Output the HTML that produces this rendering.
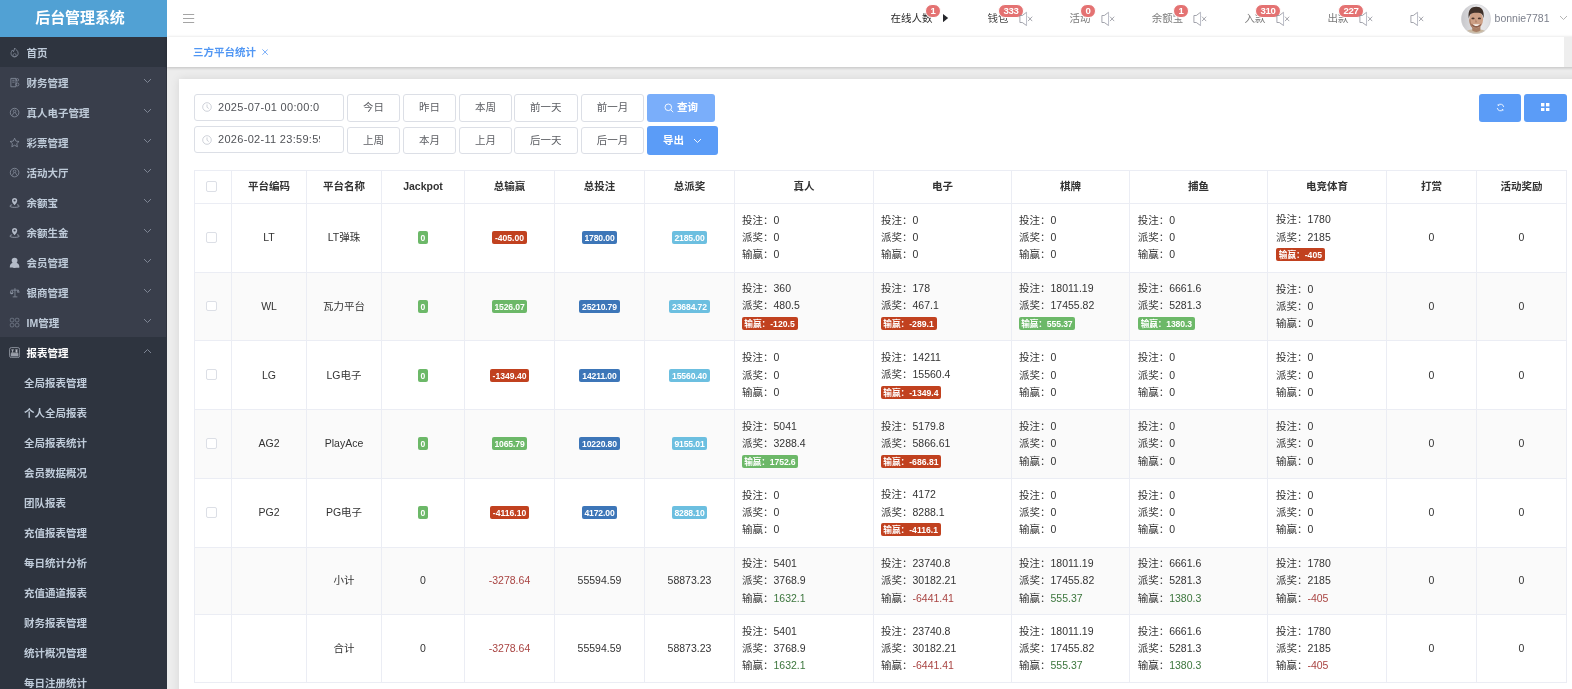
<!DOCTYPE html><html lang="zh-CN"><head><meta charset="utf-8"><title>后台管理系统</title><style>
*{box-sizing:border-box;margin:0;padding:0}
html,body{width:1572px;height:689px;overflow:hidden}
body{position:relative;background:#ededed;font-family:"Liberation Sans","Noto Sans CJK SC",sans-serif;font-size:10.5px;color:#333;-webkit-font-smoothing:antialiased}
.abs{position:absolute}
/* sidebar */
#side{position:absolute;left:0;top:0;width:167px;height:689px;background:#393e4b;overflow:hidden;box-shadow:inset -1px 0 0 rgba(0,0,0,.15)}
#logo{position:absolute;left:0;top:0;width:167px;height:37px;background:#51a1d4;color:#fff;font-weight:bold;font-size:15px;line-height:36px;text-align:center;padding-right:7px;letter-spacing:-0.1px}
.mi{position:absolute;left:0;width:167px;height:30px;line-height:32px;color:#bfcbd9;font-weight:bold;font-size:10.5px;padding-left:26.5px;white-space:nowrap}
.mi.sub{padding-left:24px}
.mi svg.ic{position:absolute;left:8.7px;top:9.7px;width:11.2px;height:11.2px}
.mi svg.ar{position:absolute;left:143px;top:10.6px;width:9px;height:6px}
#home{background:#2e343f}
#subbg{position:absolute;left:0;top:337px;width:167px;height:360px;background:#2e343f}
/* header */
#head{position:absolute;left:167px;top:0;width:1405px;height:37px;background:#fff}
#tabs{position:absolute;left:167px;top:37px;width:1425px;height:30px;background:#fff;box-shadow:0 1px 3px rgba(0,0,0,.2),0 -1px 3px rgba(0,0,0,.045)}
#tabs .sb{position:absolute;left:1397px;top:0;width:8px;height:30px;background:#eee}
#tabs .t{position:absolute;left:26px;top:0;line-height:30px;color:#5197f4;font-size:10.5px;font-weight:bold}
.hi{position:absolute;top:0;height:36px;line-height:36px;font-size:10.5px;color:#666;white-space:nowrap}
.bd{position:absolute;height:14px;line-height:11.8px;border-radius:7px;background:#e47272;color:#fff;font-size:9.6px;letter-spacing:-.3px;font-weight:bold;text-align:center;padding:0 4.5px;white-space:nowrap;border:0.75px solid #fff}
/* card */
#card{position:absolute;left:178.5px;top:78.5px;width:1420px;height:640px;background:#fff;box-shadow:0 0 9px rgba(0,0,0,.10)}
.inp{position:absolute;left:194px;width:150px;height:27px;border:1px solid #dcdfe6;border-radius:3px;background:#fff;font-size:11px;letter-spacing:.3px;line-height:25px;color:#505257;padding-left:23px;overflow:hidden;white-space:nowrap}
.inp span{display:block;width:101.8px;overflow:hidden}
.btn{position:absolute;height:27.5px;border:1px solid #dcdfe6;border-radius:3px;background:#fff;font-size:10.5px;line-height:25.5px;color:#5c5e63;text-align:center}
.pb{position:absolute;border-radius:3px;background:#5b9cf7;color:#fff;font-weight:bold;font-size:10.5px;text-align:center}
/* table */
#tbl{position:absolute;left:0;top:0;width:0;height:0;font-size:10.5px;color:#333}
#tbl .c{position:absolute;height:17px;line-height:17px;text-align:center;white-space:nowrap}
#tbl .hd{font-weight:bold}
#tbl .ln{position:absolute;height:17px;line-height:17px;white-space:nowrap}
.cb{position:absolute;width:10.5px;height:10.5px;border:1px solid #dcdfe6;border-radius:2px;background:#fff}
.lb{display:inline-block;color:#fff;font-weight:bold;font-size:8.6px;line-height:14.9px;height:12.9px;overflow:hidden;padding:0 2.85px;border-radius:2px;vertical-align:top}
.r{background:#c1411f}.b{background:#3d76b8}.i{background:#6cbfe0}.g{background:#6cb868}
.tg{color:#3c763d}.tr{color:#a94442}
</style></head><body>
<div id="wrap" style="position:absolute;left:0;top:0;width:1572px;height:689px;will-change:transform">
<div id="side"><div id="logo">后台管理系统</div><div id="subbg"></div>
<div class="mi" id="home" style="top:37px;"><svg class="ic" viewBox="0 0 12 12"><path d="M6 1.2 C7 2.6 9.8 3.6 9.8 6.8 C9.8 9 8.2 10.6 6 10.6 C3.8 10.6 2.2 9 2.2 6.8 C2.2 5 3.2 4.4 3.6 3.2 C4.4 3.8 4.6 4.4 4.8 5 C5.4 4 5.8 2.6 6 1.2 Z" fill="none" stroke="#8f97a6" stroke-width=".8"/><path d="M6 10.4 C4.9 10.4 4.3 9.6 4.3 8.8 C4.3 7.8 5.4 7.4 6 6.4 C6.6 7.4 7.7 7.8 7.7 8.8 C7.7 9.6 7.1 10.4 6 10.4Z" fill="none" stroke="#8f97a6" stroke-width=".7"/></svg>首页</div>
<div class="mi" style="top:67px;"><svg class="ic" viewBox="0 0 12 12"><path d="M2 1.5 H7.5 V10.5 H2 Z M3.5 3.5 H6 M3.5 5.5 H6" fill="none" stroke="#8f97a6" stroke-width=".8"/><circle cx="9" cy="3" r="1.3" fill="none" stroke="#8f97a6" stroke-width=".7"/><circle cx="9" cy="8" r="1.6" fill="none" stroke="#8f97a6" stroke-width=".7"/></svg>财务管理<svg class="ar" viewBox="0 0 9 6"><path d="M1 1 L4.5 4.5 L8 1" fill="none" stroke="#7e8594" stroke-width="1"/></svg></div>
<div class="mi" style="top:97px;"><svg class="ic" viewBox="0 0 12 12"><circle cx="6" cy="6" r="4.6" fill="none" stroke="#8f97a6" stroke-width=".8"/><circle cx="6" cy="4.6" r="1.4" fill="none" stroke="#8f97a6" stroke-width=".7"/><path d="M3.2 9.4 L5.2 6 M8.8 9.4 L6.8 6" fill="none" stroke="#8f97a6" stroke-width=".7"/></svg>真人电子管理<svg class="ar" viewBox="0 0 9 6"><path d="M1 1 L4.5 4.5 L8 1" fill="none" stroke="#7e8594" stroke-width="1"/></svg></div>
<div class="mi" style="top:127px;"><svg class="ic" viewBox="0 0 12 12"><path d="M6 1.3 L7.4 4.4 L10.8 4.8 L8.3 7.1 L9 10.5 L6 8.8 L3 10.5 L3.7 7.1 L1.2 4.8 L4.6 4.4 Z" fill="none" stroke="#8f97a6" stroke-width=".8" stroke-linejoin="round"/></svg>彩票管理<svg class="ar" viewBox="0 0 9 6"><path d="M1 1 L4.5 4.5 L8 1" fill="none" stroke="#7e8594" stroke-width="1"/></svg></div>
<div class="mi" style="top:157px;"><svg class="ic" viewBox="0 0 12 12"><circle cx="6" cy="6" r="4.6" fill="none" stroke="#8f97a6" stroke-width=".8"/><circle cx="6" cy="4.6" r="1.4" fill="none" stroke="#8f97a6" stroke-width=".7"/><path d="M3.2 9.4 L5.2 6 M8.8 9.4 L6.8 6" fill="none" stroke="#8f97a6" stroke-width=".7"/></svg>活动大厅<svg class="ar" viewBox="0 0 9 6"><path d="M1 1 L4.5 4.5 L8 1" fill="none" stroke="#7e8594" stroke-width="1"/></svg></div>
<div class="mi" style="top:187px;"><svg class="ic" viewBox="0 0 12 12"><path d="M6 8.8 C4.4 6.8 3.2 5.6 3.2 3.9 A2.8 2.8 0 0 1 8.8 3.9 C8.8 5.6 7.6 6.8 6 8.8 Z" fill="#b4bbc8"/><circle cx="6" cy="3.8" r="1.15" fill="#393e4b"/><path d="M3.4 8.4 C1.8 8.6 1 9.2 1 9.8 C1 10.6 3.2 11.1 6 11.1 C8.8 11.1 11 10.6 11 9.8 C11 9.2 10.2 8.6 8.6 8.4" fill="none" stroke="#aab1be" stroke-width=".8"/></svg>余额宝<svg class="ar" viewBox="0 0 9 6"><path d="M1 1 L4.5 4.5 L8 1" fill="none" stroke="#7e8594" stroke-width="1"/></svg></div>
<div class="mi" style="top:217px;"><svg class="ic" viewBox="0 0 12 12"><path d="M6 8.8 C4.4 6.8 3.2 5.6 3.2 3.9 A2.8 2.8 0 0 1 8.8 3.9 C8.8 5.6 7.6 6.8 6 8.8 Z" fill="#b4bbc8"/><circle cx="6" cy="3.8" r="1.15" fill="#393e4b"/><path d="M3.4 8.4 C1.8 8.6 1 9.2 1 9.8 C1 10.6 3.2 11.1 6 11.1 C8.8 11.1 11 10.6 11 9.8 C11 9.2 10.2 8.6 8.6 8.4" fill="none" stroke="#aab1be" stroke-width=".8"/></svg>余额生金<svg class="ar" viewBox="0 0 9 6"><path d="M1 1 L4.5 4.5 L8 1" fill="none" stroke="#7e8594" stroke-width="1"/></svg></div>
<div class="mi" style="top:247px;"><svg class="ic" viewBox="0 0 12 12"><path d="M.9 11.3 C.6 8.2 2.4 6.6 4.2 6.3 H7.8 C9.6 6.6 11.4 8.2 11.1 11.3 C11.1 11.8 .9 11.8 .9 11.3 Z" fill="#b4bbc8"/><circle cx="6" cy="3.8" r="3.1" fill="#b4bbc8"/></svg>会员管理<svg class="ar" viewBox="0 0 9 6"><path d="M1 1 L4.5 4.5 L8 1" fill="none" stroke="#7e8594" stroke-width="1"/></svg></div>
<div class="mi" style="top:277px;"><svg class="ic" viewBox="0 0 12 12"><path d="M6.4 1.2 V10.4 M4 10.6 H9 M2.4 3.4 H10.2 M2.2 3.6 L1.4 6.4 H4.4 L3.4 3.6 M9.8 3.4 L9 5.6 H11 Z" fill="none" stroke="#8f97a6" stroke-width=".8"/><path d="M1.4 6.4 A1.5 1.3 0 0 0 4.4 6.4 Z" fill="#8f97a6"/></svg>银商管理<svg class="ar" viewBox="0 0 9 6"><path d="M1 1 L4.5 4.5 L8 1" fill="none" stroke="#7e8594" stroke-width="1"/></svg></div>
<div class="mi" style="top:307px;"><svg class="ic" viewBox="0 0 12 12"><rect x="1.4" y="1.4" width="3.8" height="3.8" rx="1.3" fill="none" stroke="#818998" stroke-width=".75"/><rect x="6.8" y="1.4" width="3.8" height="3.8" rx="1.3" fill="none" stroke="#818998" stroke-width=".75"/><rect x="1.4" y="6.8" width="3.8" height="3.8" rx="1.3" fill="none" stroke="#818998" stroke-width=".75"/><rect x="6.8" y="6.8" width="3.8" height="3.8" rx="1.3" fill="none" stroke="#818998" stroke-width=".75"/></svg>IM管理<svg class="ar" viewBox="0 0 9 6"><path d="M1 1 L4.5 4.5 L8 1" fill="none" stroke="#7e8594" stroke-width="1"/></svg></div>
<div class="mi" style="top:337px;color:#fff;"><svg class="ic" viewBox="0 0 12 12"><rect x=".6" y=".6" width="10.8" height="10.8" rx="2" fill="#2e343f" stroke="#a3a8b3" stroke-width=".8"/><rect x="1.9" y="6.9" width="8.2" height="3.2" fill="#9a9fab"/><path d="M2.5 3.1 H5.2 M3.85 3.1 V5.9 M6.7 3.1 H9.4 M6.7 4.5 H9.4 M8.05 3.1 V5.9" stroke="#d2d6de" stroke-width=".75" fill="none"/><path d="M2.2 6.5 H9.8" stroke="#dde0e6" stroke-width=".7"/></svg>报表管理<svg class="ar" viewBox="0 0 9 6"><path d="M1 5 L4.5 1.5 L8 5" fill="none" stroke="#7e8594" stroke-width="1"/></svg></div>
<div class="mi sub" style="top:367px">全局报表管理</div>
<div class="mi sub" style="top:397px">个人全局报表</div>
<div class="mi sub" style="top:427px">全局报表统计</div>
<div class="mi sub" style="top:457px">会员数据概况</div>
<div class="mi sub" style="top:487px">团队报表</div>
<div class="mi sub" style="top:517px">充值报表管理</div>
<div class="mi sub" style="top:547px">每日统计分析</div>
<div class="mi sub" style="top:577px">充值通道报表</div>
<div class="mi sub" style="top:607px">财务报表管理</div>
<div class="mi sub" style="top:637px">统计概况管理</div>
<div class="mi sub" style="top:667px">每日注册统计</div>
</div>
<div id="head">
<svg class="abs" style="left:16.3px;top:13px" width="12" height="11" viewBox="0 0 12 11"><path d="M0 1.5 H11.2 M0 5.5 H11.2 M0 9.5 H11.2" stroke="#9b9b9b" stroke-width=".9" fill="none"/></svg>
<div class="hi" style="left:723.4px;color:#2b2b2b">在线人数</div>
<div class="bd" style="left:758.25px;top:4px;width:15.5px;padding:0;">1</div>
<svg class="abs" style="left:775.7px;top:13.8px" width="6" height="8.2" viewBox="0 0 6 8.2"><path d="M0 0 L5.2 4.1 L0 8.2 Z" fill="#26272b"/></svg>
<div class="hi" style="left:820.5px;color:#4a4a4a">钱包</div>
<div class="bd" style="left:831.25px;top:4px;width:25.7px;padding:0;">333</div>
<svg class="abs" style="left:851.5px;top:11px" width="15" height="16" viewBox="0 0 15 16"><path d="M.9 4.5 H3.3 L7.5 1.3 V14.5 L3.3 11.5 H.9 Z" fill="none" stroke="#8d8f99" stroke-width=".8" stroke-linejoin="miter"/><path d="M7.55 1.2 V14.6" stroke="#c4c6cf" stroke-width=".9"/><path d="M9 5.7 L13.2 10.1 M13.2 5.7 L9 10.1" stroke="#8f9199" stroke-width=".8" fill="none"/></svg>
<div class="hi" style="left:902.6px;color:#7b7b7b">活动</div>
<div class="bd" style="left:913.25px;top:4px;width:15.5px;padding:0;">0</div>
<svg class="abs" style="left:933.6px;top:11px" width="15" height="16" viewBox="0 0 15 16"><path d="M.9 4.5 H3.3 L7.5 1.3 V14.5 L3.3 11.5 H.9 Z" fill="none" stroke="#8d8f99" stroke-width=".8" stroke-linejoin="miter"/><path d="M7.55 1.2 V14.6" stroke="#c4c6cf" stroke-width=".9"/><path d="M9 5.7 L13.2 10.1 M13.2 5.7 L9 10.1" stroke="#8f9199" stroke-width=".8" fill="none"/></svg>
<div class="hi" style="left:984.8px;color:#7b7b7b">余额宝</div>
<div class="bd" style="left:1006.25px;top:4px;width:15.5px;padding:0;">1</div>
<svg class="abs" style="left:1026.4px;top:11px" width="15" height="16" viewBox="0 0 15 16"><path d="M.9 4.5 H3.3 L7.5 1.3 V14.5 L3.3 11.5 H.9 Z" fill="none" stroke="#8d8f99" stroke-width=".8" stroke-linejoin="miter"/><path d="M7.55 1.2 V14.6" stroke="#c4c6cf" stroke-width=".9"/><path d="M9 5.7 L13.2 10.1 M13.2 5.7 L9 10.1" stroke="#8f9199" stroke-width=".8" fill="none"/></svg>
<div class="hi" style="left:1077.6px;color:#7b7b7b">入款</div>
<div class="bd" style="left:1088.25px;top:4px;width:25.5px;padding:0;">310</div>
<svg class="abs" style="left:1108.6px;top:11px" width="15" height="16" viewBox="0 0 15 16"><path d="M.9 4.5 H3.3 L7.5 1.3 V14.5 L3.3 11.5 H.9 Z" fill="none" stroke="#8d8f99" stroke-width=".8" stroke-linejoin="miter"/><path d="M7.55 1.2 V14.6" stroke="#c4c6cf" stroke-width=".9"/><path d="M9 5.7 L13.2 10.1 M13.2 5.7 L9 10.1" stroke="#8f9199" stroke-width=".8" fill="none"/></svg>
<div class="hi" style="left:1160.6px;color:#7b7b7b">出款</div>
<div class="bd" style="left:1171.25px;top:4px;width:25.5px;padding:0;">227</div>
<svg class="abs" style="left:1191.6px;top:11px" width="15" height="16" viewBox="0 0 15 16"><path d="M.9 4.5 H3.3 L7.5 1.3 V14.5 L3.3 11.5 H.9 Z" fill="none" stroke="#8d8f99" stroke-width=".8" stroke-linejoin="miter"/><path d="M7.55 1.2 V14.6" stroke="#c4c6cf" stroke-width=".9"/><path d="M9 5.7 L13.2 10.1 M13.2 5.7 L9 10.1" stroke="#8f9199" stroke-width=".8" fill="none"/></svg>
<svg class="abs" style="left:1242.5px;top:11px" width="15" height="16" viewBox="0 0 15 16"><path d="M.9 4.5 H3.3 L7.5 1.3 V14.5 L3.3 11.5 H.9 Z" fill="none" stroke="#8d8f99" stroke-width=".8" stroke-linejoin="miter"/><path d="M7.55 1.2 V14.6" stroke="#c4c6cf" stroke-width=".9"/><path d="M9 5.7 L13.2 10.1 M13.2 5.7 L9 10.1" stroke="#8f9199" stroke-width=".8" fill="none"/></svg>
<svg class="abs" style="left:1294px;top:4px" width="30" height="30" viewBox="0 0 30 30"><defs><clipPath id="cp"><circle cx="15" cy="15" r="14.7"/></clipPath><linearGradient id="bg" x1="0" y1="0" x2="1" y2="0"><stop offset="0" stop-color="#c6c6ca"/><stop offset=".6" stop-color="#e9e9eb"/><stop offset="1" stop-color="#dcdcdf"/></linearGradient></defs><g clip-path="url(#cp)"><rect width="30" height="30" fill="url(#bg)"/><g><path d="M1 32 C3 26 8 25.6 15 25.6 C22 25.6 26 26 29 32 Z" fill="#c9b9a2"/><path d="M11.2 20 H19.4 V26.6 C17 28.4 13.6 28.4 11.2 26.6 Z" fill="#a97f66"/><ellipse cx="15.2" cy="15.6" rx="6.9" ry="8.6" fill="#cda086"/><path d="M8.3 15.6 C8.3 22 11 24.4 13 24.4 C10.5 22 9.6 19 9.4 15 Z" fill="#a87c64"/><path d="M7.8 14.6 C6.4 5.6 10.6 2.8 15.2 2.8 C20.4 2.8 23.6 5.8 22.6 14.6 C22 10.6 20.8 8.6 15.2 8.8 C10.2 8.8 8.6 10.4 7.8 14.6 Z" fill="#3f3029"/><path d="M10 19.4 C11.4 25.2 19.2 25.2 20.6 19.4 C18.8 21.6 11.8 21.6 10 19.4Z" fill="#8d604d"/><path d="M11.8 20.2 C13.4 22.6 17.2 22.6 18.8 20.2 Z" fill="#f6f0ea"/><ellipse cx="12" cy="14.4" rx="1.6" ry=".9" fill="#4a342b"/><ellipse cx="18.4" cy="14.4" rx="1.6" ry=".9" fill="#4a342b"/><path d="M14.6 15 L13.9 18.4 H16.5 Z" fill="#b3856d"/></g></g><circle cx="15" cy="15" r="14.6" fill="none" stroke="#cfcfd3" stroke-width=".5"/></svg>
<div class="hi" style="left:1327.6px;color:#7b7f8b">bonnie7781</div>
<svg class="abs" style="left:1392px;top:15px" width="9" height="6" viewBox="0 0 9 6"><path d="M1 1 L4.5 4.5 L8 1" fill="none" stroke="#aaa" stroke-width=".9"/></svg>
</div>
<div id="tabs"><div class="sb"></div><div class="t">三方平台统计<svg style="margin-left:6.2px;position:relative;top:-.5px" width="6.2" height="6.2" viewBox="0 0 6 6"><path d="M.4 .4 L5.6 5.6 M5.6 .4 L.4 5.6" stroke="#5b9cf7" stroke-width=".8"/></svg></div></div>
<div id="card"></div>
<div class="inp" style="top:94px"><svg class="abs" style="left:7.4px;top:7.4px" width="10" height="10" viewBox="0 0 10 10"><circle cx="5" cy="5" r="4.3" fill="none" stroke="#c3c6cf" stroke-width=".8"/><path d="M5 2.4 V5.2 L6.8 6.6" fill="none" stroke="#c3c6cf" stroke-width=".8"/></svg><span>2025-07-01 00:00:00</span></div>
<div class="inp" style="top:126px"><svg class="abs" style="left:7.4px;top:8.2px" width="10" height="10" viewBox="0 0 10 10"><circle cx="5" cy="5" r="4.3" fill="none" stroke="#c3c6cf" stroke-width=".8"/><path d="M5 2.4 V5.2 L6.8 6.6" fill="none" stroke="#c3c6cf" stroke-width=".8"/></svg><span>2026-02-11 23:59:59</span></div>
<div class="btn" style="left:347px;top:94.1px;width:53px">今日</div>
<div class="btn" style="left:402.9px;top:94.1px;width:53px">昨日</div>
<div class="btn" style="left:458.9px;top:94.1px;width:53px">本周</div>
<div class="btn" style="left:514px;top:94.1px;width:63.5px">前一天</div>
<div class="btn" style="left:580.9px;top:94.1px;width:63px">前一月</div>
<div class="btn" style="left:347px;top:126.8px;width:53px">上周</div>
<div class="btn" style="left:402.9px;top:126.8px;width:53px">本月</div>
<div class="btn" style="left:458.9px;top:126.8px;width:53px">上月</div>
<div class="btn" style="left:514px;top:126.8px;width:63.5px">后一天</div>
<div class="btn" style="left:580.9px;top:126.8px;width:63px">后一月</div>
<div class="pb" style="left:647px;top:94px;width:68px;height:28px;line-height:27px;background:#7aaefa"><svg style="vertical-align:-1.5px;margin-right:3px" width="10" height="10" viewBox="0 0 10 10"><circle cx="4.3" cy="4.3" r="3.3" fill="none" stroke="#fff" stroke-width=".9"/><path d="M6.8 6.8 L9.2 9.2" stroke="#fff" stroke-width=".9"/></svg>查询</div>
<div class="pb" style="left:647px;top:126px;width:71px;height:29px;line-height:28px">导出<svg style="margin-left:9px;vertical-align:0" width="9" height="6" viewBox="0 0 9 6"><path d="M1 1 L4.5 4.5 L8 1" fill="none" stroke="#fff" stroke-width=".9"/></svg></div>
<div class="pb" style="left:1479px;top:94px;width:42px;height:28px"><svg class="abs" style="left:16.8px;top:8.5px" width="9" height="9" viewBox="0 0 10 10"><path d="M8.6 4.4 A3.65 3.65 0 0 0 2.3 2.5 M1.4 5.6 A3.65 3.65 0 0 0 7.7 7.5" fill="none" stroke="#fff" stroke-width=".95"/><path d="M1.9 1 V3.1 H4 Z M8.1 9 V6.9 H6 Z" fill="#fff"/></svg></div>
<div class="pb" style="left:1524px;top:94px;width:43px;height:28px"><svg class="abs" style="left:17.2px;top:8.9px" width="8.4" height="8.4" viewBox="0 0 8.4 8.4"><rect x="0" y="0" width="3.4" height="3.4" fill="#fff"/><rect x="5" y="0" width="3.4" height="3.4" fill="#fff"/><rect x="0" y="5" width="3.4" height="3.4" fill="#fff"/><rect x="5" y="5" width="3.4" height="3.4" fill="#fff"/></svg></div>
<div id="tbl">
<div class="abs" style="left:195px;top:273px;width:1371px;height:67px;background:#fafafa"></div>
<div class="abs" style="left:195px;top:410px;width:1371px;height:68px;background:#fafafa"></div>
<div class="abs" style="left:195px;top:548px;width:1371px;height:66px;background:#fafafa"></div>
<div class="abs" style="left:194px;top:170px;width:1373px;height:1px;background:#ebedf4"></div>
<div class="abs" style="left:194px;top:203px;width:1373px;height:1px;background:#ebedf4"></div>
<div class="abs" style="left:194px;top:272px;width:1373px;height:1px;background:#ebedf4"></div>
<div class="abs" style="left:194px;top:340px;width:1373px;height:1px;background:#ebedf4"></div>
<div class="abs" style="left:194px;top:409px;width:1373px;height:1px;background:#ebedf4"></div>
<div class="abs" style="left:194px;top:478px;width:1373px;height:1px;background:#ebedf4"></div>
<div class="abs" style="left:194px;top:547px;width:1373px;height:1px;background:#ebedf4"></div>
<div class="abs" style="left:194px;top:614px;width:1373px;height:1px;background:#ebedf4"></div>
<div class="abs" style="left:194px;top:682px;width:1373px;height:1px;background:#ebedf4"></div>
<div class="abs" style="left:194px;top:170px;width:1px;height:513px;background:#ebedf4"></div>
<div class="abs" style="left:231px;top:170px;width:1px;height:513px;background:#ebedf4"></div>
<div class="abs" style="left:306px;top:170px;width:1px;height:513px;background:#ebedf4"></div>
<div class="abs" style="left:381px;top:170px;width:1px;height:513px;background:#ebedf4"></div>
<div class="abs" style="left:464px;top:170px;width:1px;height:513px;background:#ebedf4"></div>
<div class="abs" style="left:554px;top:170px;width:1px;height:513px;background:#ebedf4"></div>
<div class="abs" style="left:644px;top:170px;width:1px;height:513px;background:#ebedf4"></div>
<div class="abs" style="left:734px;top:170px;width:1px;height:513px;background:#ebedf4"></div>
<div class="abs" style="left:873px;top:170px;width:1px;height:513px;background:#ebedf4"></div>
<div class="abs" style="left:1011px;top:170px;width:1px;height:513px;background:#ebedf4"></div>
<div class="abs" style="left:1129px;top:170px;width:1px;height:513px;background:#ebedf4"></div>
<div class="abs" style="left:1267px;top:170px;width:1px;height:513px;background:#ebedf4"></div>
<div class="abs" style="left:1386px;top:170px;width:1px;height:513px;background:#ebedf4"></div>
<div class="abs" style="left:1476px;top:170px;width:1px;height:513px;background:#ebedf4"></div>
<div class="abs" style="left:1566px;top:170px;width:1px;height:513px;background:#ebedf4"></div>
<div class="cb" style="left:206.4px;top:181.1px"></div>
<div class="c hd" style="left:232px;width:74px;top:178px">平台编码</div>
<div class="c hd" style="left:307px;width:74px;top:178px">平台名称</div>
<div class="c hd" style="left:382px;width:82px;top:178px">Jackpot</div>
<div class="c hd" style="left:465px;width:89px;top:178px">总输赢</div>
<div class="c hd" style="left:555px;width:89px;top:178px">总投注</div>
<div class="c hd" style="left:645px;width:89px;top:178px">总派奖</div>
<div class="c hd" style="left:735px;width:138px;top:178px">真人</div>
<div class="c hd" style="left:874px;width:137px;top:178px">电子</div>
<div class="c hd" style="left:1012px;width:117px;top:178px">棋牌</div>
<div class="c hd" style="left:1130px;width:137px;top:178px">捕鱼</div>
<div class="c hd" style="left:1268px;width:118px;top:178px">电竞体育</div>
<div class="c hd" style="left:1387px;width:89px;top:178px">打赏</div>
<div class="c hd" style="left:1477px;width:89px;top:178px">活动奖励</div>
<div class="cb" style="left:206.4px;top:232.45px"></div>
<div class="c" style="left:232px;width:74px;top:229px">LT</div>
<div class="c" style="left:307px;width:74px;top:229px">LT弹珠</div>
<div class="c" style="left:382px;width:82px;top:231px;height:12.9px;line-height:12.9px"><span class="lb g">0</span></div>
<div class="c" style="left:465px;width:89px;top:231px;height:12.9px;line-height:12.9px"><span class="lb r">-405.00</span></div>
<div class="c" style="left:555px;width:89px;top:231px;height:12.9px;line-height:12.9px"><span class="lb b" style="letter-spacing:-.12px">1780.00</span></div>
<div class="c" style="left:645px;width:89px;top:231px;height:12.9px;line-height:12.9px"><span class="lb i" style="letter-spacing:-.12px">2185.00</span></div>
<div class="ln" style="left:742px;top:212px">投注：0</div>
<div class="ln" style="left:742px;top:229px">派奖：0</div>
<div class="ln" style="left:742px;top:246px">输赢：0</div>
<div class="ln" style="left:881px;top:212px">投注：0</div>
<div class="ln" style="left:881px;top:229px">派奖：0</div>
<div class="ln" style="left:881px;top:246px">输赢：0</div>
<div class="ln" style="left:1019px;top:212px">投注：0</div>
<div class="ln" style="left:1019px;top:229px">派奖：0</div>
<div class="ln" style="left:1019px;top:246px">输赢：0</div>
<div class="ln" style="left:1137.7px;top:212px">投注：0</div>
<div class="ln" style="left:1137.7px;top:229px">派奖：0</div>
<div class="ln" style="left:1137.7px;top:246px">输赢：0</div>
<div class="ln" style="left:1275.9px;top:211px">投注：1780</div>
<div class="ln" style="left:1275.9px;top:229px">派奖：2185</div>
<div class="ln" style="left:1276px;top:248.1px;height:12.9px;line-height:12.9px"><span class="lb r" style="font-size:8.65px">输赢：-405</span></div>
<div class="c" style="left:1387px;width:89px;top:229px">0</div>
<div class="c" style="left:1477px;width:89px;top:229px">0</div>
<div class="cb" style="left:206.4px;top:300.95px"></div>
<div class="c" style="left:232px;width:74px;top:298px">WL</div>
<div class="c" style="left:307px;width:74px;top:298px">瓦力平台</div>
<div class="c" style="left:382px;width:82px;top:300px;height:12.9px;line-height:12.9px"><span class="lb g">0</span></div>
<div class="c" style="left:465px;width:89px;top:300px;height:12.9px;line-height:12.9px"><span class="lb g" style="letter-spacing:-.12px">1526.07</span></div>
<div class="c" style="left:555px;width:89px;top:300px;height:12.9px;line-height:12.9px"><span class="lb b" style="letter-spacing:-.12px">25210.79</span></div>
<div class="c" style="left:645px;width:89px;top:300px;height:12.9px;line-height:12.9px"><span class="lb i" style="letter-spacing:-.12px">23684.72</span></div>
<div class="ln" style="left:742px;top:280px">投注：360</div>
<div class="ln" style="left:742px;top:297px">派奖：480.5</div>
<div class="ln" style="left:741.5px;top:317px;height:12.9px;line-height:12.9px"><span class="lb r" style="font-size:8.65px">输赢：-120.5</span></div>
<div class="ln" style="left:881px;top:280px">投注：178</div>
<div class="ln" style="left:881px;top:297px">派奖：467.1</div>
<div class="ln" style="left:880.5px;top:317px;height:12.9px;line-height:12.9px"><span class="lb r" style="font-size:8.65px">输赢：-289.1</span></div>
<div class="ln" style="left:1019px;top:280px">投注：18011.19</div>
<div class="ln" style="left:1019px;top:297px">派奖：17455.82</div>
<div class="ln" style="left:1018.5px;top:317px;height:12.9px;line-height:12.9px"><span class="lb g" style="font-size:8.65px;letter-spacing:-.12px">输赢：555.37</span></div>
<div class="ln" style="left:1137.7px;top:280px">投注：6661.6</div>
<div class="ln" style="left:1137.7px;top:297px">派奖：5281.3</div>
<div class="ln" style="left:1137.9px;top:317px;height:12.9px;line-height:12.9px"><span class="lb g" style="font-size:8.65px;letter-spacing:-.12px">输赢：1380.3</span></div>
<div class="ln" style="left:1275.9px;top:281px">投注：0</div>
<div class="ln" style="left:1275.9px;top:298px">派奖：0</div>
<div class="ln" style="left:1275.9px;top:315px">输赢：0</div>
<div class="c" style="left:1387px;width:89px;top:298px">0</div>
<div class="c" style="left:1477px;width:89px;top:298px">0</div>
<div class="cb" style="left:206.4px;top:369.45px"></div>
<div class="c" style="left:232px;width:74px;top:367px">LG</div>
<div class="c" style="left:307px;width:74px;top:367px">LG电子</div>
<div class="c" style="left:382px;width:82px;top:369.1px;height:12.9px;line-height:12.9px"><span class="lb g">0</span></div>
<div class="c" style="left:465px;width:89px;top:369.1px;height:12.9px;line-height:12.9px"><span class="lb r">-1349.40</span></div>
<div class="c" style="left:555px;width:89px;top:369.1px;height:12.9px;line-height:12.9px"><span class="lb b" style="letter-spacing:-.12px">14211.00</span></div>
<div class="c" style="left:645px;width:89px;top:369.1px;height:12.9px;line-height:12.9px"><span class="lb i" style="letter-spacing:-.12px">15560.40</span></div>
<div class="ln" style="left:742px;top:349px">投注：0</div>
<div class="ln" style="left:742px;top:367px">派奖：0</div>
<div class="ln" style="left:742px;top:384px">输赢：0</div>
<div class="ln" style="left:881px;top:349px">投注：14211</div>
<div class="ln" style="left:881px;top:366px">派奖：15560.4</div>
<div class="ln" style="left:880.5px;top:385.9px;height:12.9px;line-height:12.9px"><span class="lb r" style="font-size:8.65px">输赢：-1349.4</span></div>
<div class="ln" style="left:1019px;top:349px">投注：0</div>
<div class="ln" style="left:1019px;top:367px">派奖：0</div>
<div class="ln" style="left:1019px;top:384px">输赢：0</div>
<div class="ln" style="left:1137.7px;top:349px">投注：0</div>
<div class="ln" style="left:1137.7px;top:367px">派奖：0</div>
<div class="ln" style="left:1137.7px;top:384px">输赢：0</div>
<div class="ln" style="left:1275.9px;top:349px">投注：0</div>
<div class="ln" style="left:1275.9px;top:367px">派奖：0</div>
<div class="ln" style="left:1275.9px;top:384px">输赢：0</div>
<div class="c" style="left:1387px;width:89px;top:367px">0</div>
<div class="c" style="left:1477px;width:89px;top:367px">0</div>
<div class="cb" style="left:206.4px;top:438.45px"></div>
<div class="c" style="left:232px;width:74px;top:435px">AG2</div>
<div class="c" style="left:307px;width:74px;top:435px">PlayAce</div>
<div class="c" style="left:382px;width:82px;top:437.2px;height:12.9px;line-height:12.9px"><span class="lb g">0</span></div>
<div class="c" style="left:465px;width:89px;top:437.2px;height:12.9px;line-height:12.9px"><span class="lb g" style="letter-spacing:-.12px">1065.79</span></div>
<div class="c" style="left:555px;width:89px;top:437.2px;height:12.9px;line-height:12.9px"><span class="lb b" style="letter-spacing:-.12px">10220.80</span></div>
<div class="c" style="left:645px;width:89px;top:437.2px;height:12.9px;line-height:12.9px"><span class="lb i" style="letter-spacing:-.12px">9155.01</span></div>
<div class="ln" style="left:742px;top:418px">投注：5041</div>
<div class="ln" style="left:742px;top:435px">派奖：3288.4</div>
<div class="ln" style="left:741.5px;top:455px;height:12.9px;line-height:12.9px"><span class="lb g" style="font-size:8.65px;letter-spacing:-.12px">输赢：1752.6</span></div>
<div class="ln" style="left:881px;top:418px">投注：5179.8</div>
<div class="ln" style="left:881px;top:435px">派奖：5866.61</div>
<div class="ln" style="left:880.5px;top:455px;height:12.9px;line-height:12.9px"><span class="lb r" style="font-size:8.65px">输赢：-686.81</span></div>
<div class="ln" style="left:1019px;top:418px">投注：0</div>
<div class="ln" style="left:1019px;top:435px">派奖：0</div>
<div class="ln" style="left:1019px;top:453px">输赢：0</div>
<div class="ln" style="left:1137.7px;top:418px">投注：0</div>
<div class="ln" style="left:1137.7px;top:435px">派奖：0</div>
<div class="ln" style="left:1137.7px;top:453px">输赢：0</div>
<div class="ln" style="left:1275.9px;top:418px">投注：0</div>
<div class="ln" style="left:1275.9px;top:435px">派奖：0</div>
<div class="ln" style="left:1275.9px;top:453px">输赢：0</div>
<div class="c" style="left:1387px;width:89px;top:435px">0</div>
<div class="c" style="left:1477px;width:89px;top:435px">0</div>
<div class="cb" style="left:206.4px;top:507.45px"></div>
<div class="c" style="left:232px;width:74px;top:504px">PG2</div>
<div class="c" style="left:307px;width:74px;top:504px">PG电子</div>
<div class="c" style="left:382px;width:82px;top:506px;height:12.9px;line-height:12.9px"><span class="lb g">0</span></div>
<div class="c" style="left:465px;width:89px;top:506px;height:12.9px;line-height:12.9px"><span class="lb r">-4116.10</span></div>
<div class="c" style="left:555px;width:89px;top:506px;height:12.9px;line-height:12.9px"><span class="lb b" style="letter-spacing:-.12px">4172.00</span></div>
<div class="c" style="left:645px;width:89px;top:506px;height:12.9px;line-height:12.9px"><span class="lb i" style="letter-spacing:-.12px">8288.10</span></div>
<div class="ln" style="left:742px;top:487px">投注：0</div>
<div class="ln" style="left:742px;top:504px">派奖：0</div>
<div class="ln" style="left:742px;top:521px">输赢：0</div>
<div class="ln" style="left:881px;top:486px">投注：4172</div>
<div class="ln" style="left:881px;top:504px">派奖：8288.1</div>
<div class="ln" style="left:880.5px;top:523px;height:12.9px;line-height:12.9px"><span class="lb r" style="font-size:8.65px">输赢：-4116.1</span></div>
<div class="ln" style="left:1019px;top:487px">投注：0</div>
<div class="ln" style="left:1019px;top:504px">派奖：0</div>
<div class="ln" style="left:1019px;top:521px">输赢：0</div>
<div class="ln" style="left:1137.7px;top:487px">投注：0</div>
<div class="ln" style="left:1137.7px;top:504px">派奖：0</div>
<div class="ln" style="left:1137.7px;top:521px">输赢：0</div>
<div class="ln" style="left:1275.9px;top:487px">投注：0</div>
<div class="ln" style="left:1275.9px;top:504px">派奖：0</div>
<div class="ln" style="left:1275.9px;top:521px">输赢：0</div>
<div class="c" style="left:1387px;width:89px;top:504px">0</div>
<div class="c" style="left:1477px;width:89px;top:504px">0</div>
<div class="c" style="left:307px;width:74px;top:572px">小计</div>
<div class="c" style="left:382px;width:82px;top:572px">0</div>
<div class="c" style="left:465px;width:89px;top:572px"><span class="tr">-3278.64</span></div>
<div class="c" style="left:555px;width:89px;top:572px">55594.59</div>
<div class="c" style="left:645px;width:89px;top:572px">58873.23</div>
<div class="ln" style="left:742px;top:555px">投注：5401</div>
<div class="ln" style="left:742px;top:572px">派奖：3768.9</div>
<div class="ln" style="left:742px;top:590px">输赢：<span class="tg">1632.1</span></div>
<div class="ln" style="left:881px;top:555px">投注：23740.8</div>
<div class="ln" style="left:881px;top:572px">派奖：30182.21</div>
<div class="ln" style="left:881px;top:590px">输赢：<span class="tr">-6441.41</span></div>
<div class="ln" style="left:1019px;top:555px">投注：18011.19</div>
<div class="ln" style="left:1019px;top:572px">派奖：17455.82</div>
<div class="ln" style="left:1019px;top:590px">输赢：<span class="tg">555.37</span></div>
<div class="ln" style="left:1137.7px;top:555px">投注：6661.6</div>
<div class="ln" style="left:1137.7px;top:572px">派奖：5281.3</div>
<div class="ln" style="left:1137.7px;top:590px">输赢：<span class="tg">1380.3</span></div>
<div class="ln" style="left:1275.9px;top:555px">投注：1780</div>
<div class="ln" style="left:1275.9px;top:572px">派奖：2185</div>
<div class="ln" style="left:1275.9px;top:590px">输赢：<span class="tr">-405</span></div>
<div class="c" style="left:1387px;width:89px;top:572px">0</div>
<div class="c" style="left:1477px;width:89px;top:572px">0</div>
<div class="c" style="left:307px;width:74px;top:640px">合计</div>
<div class="c" style="left:382px;width:82px;top:640px">0</div>
<div class="c" style="left:465px;width:89px;top:640px"><span class="tr">-3278.64</span></div>
<div class="c" style="left:555px;width:89px;top:640px">55594.59</div>
<div class="c" style="left:645px;width:89px;top:640px">58873.23</div>
<div class="ln" style="left:742px;top:623px">投注：5401</div>
<div class="ln" style="left:742px;top:640px">派奖：3768.9</div>
<div class="ln" style="left:742px;top:657px">输赢：<span class="tg">1632.1</span></div>
<div class="ln" style="left:881px;top:623px">投注：23740.8</div>
<div class="ln" style="left:881px;top:640px">派奖：30182.21</div>
<div class="ln" style="left:881px;top:657px">输赢：<span class="tr">-6441.41</span></div>
<div class="ln" style="left:1019px;top:623px">投注：18011.19</div>
<div class="ln" style="left:1019px;top:640px">派奖：17455.82</div>
<div class="ln" style="left:1019px;top:657px">输赢：<span class="tg">555.37</span></div>
<div class="ln" style="left:1137.7px;top:623px">投注：6661.6</div>
<div class="ln" style="left:1137.7px;top:640px">派奖：5281.3</div>
<div class="ln" style="left:1137.7px;top:657px">输赢：<span class="tg">1380.3</span></div>
<div class="ln" style="left:1275.9px;top:623px">投注：1780</div>
<div class="ln" style="left:1275.9px;top:640px">派奖：2185</div>
<div class="ln" style="left:1275.9px;top:657px">输赢：<span class="tr">-405</span></div>
<div class="c" style="left:1387px;width:89px;top:640px">0</div>
<div class="c" style="left:1477px;width:89px;top:640px">0</div>
</div>
</div></body></html>
